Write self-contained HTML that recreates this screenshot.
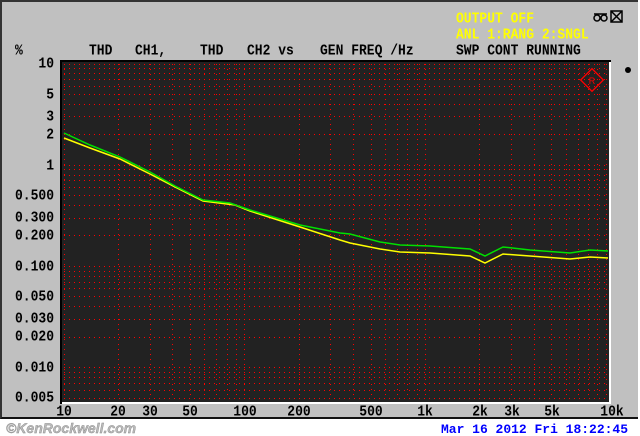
<!DOCTYPE html>
<html><head><meta charset="utf-8"><style>
html,body{margin:0;padding:0;width:640px;height:436px;overflow:hidden;background:#fff}
#panel{position:absolute;left:0;top:0;width:638px;height:419px;background:#c0c0c0;border-top:2px solid #333;border-left:2px solid #333;border-bottom:2px solid #111;box-sizing:border-box}
.t{position:absolute;font-family:"Liberation Mono",monospace;font-weight:bold;font-size:13px;line-height:13px;color:#000;white-space:pre;transform:scaleY(1.15);transform-origin:0 50%}
.y{color:#ffff00}
.r{text-align:right;width:50px}
.c{text-align:center;width:40px}
</style></head><body>
<div id="panel"></div>
<svg style="position:absolute;left:0;top:0" width="640" height="436">
<rect x="60" y="60" width="551" height="344" fill="#000"/>
<rect x="62" y="62" width="549" height="342" fill="#fff"/>
<rect x="62" y="62" width="547" height="340" fill="#222"/>
<g stroke="#ff0000" stroke-width="1" stroke-dasharray="1 4" fill="none" shape-rendering="crispEdges">
<path d="M64.5 64V398M118.5 64V398M150.5 64V398M172.5 64V398M190.5 64V398M204.5 64V398M216.5 64V398M227.5 64V398M236.5 64V398M244.5 64V398M299.5 64V398M330.5 64V398M353.5 64V398M371.5 64V398M385.5 64V398M397.5 64V398M407.5 64V398M417.5 64V398M425.5 64V398M479.5 64V398M511.5 64V398M534.5 64V398M551.5 64V398M566.5 64V398M578.5 64V398M588.5 64V398M597.5 64V398M606.5 64V398"/>
<path d="M64 64.5H607M64 68.5H607M64 73.5H607M64 79.5H607M64 86.5H607M64 94.5H607M64 104.5H607M64 116.5H607M64 134.5H607M64 165.5H607M64 169.5H607M64 175.5H607M64 180.5H607M64 187.5H607M64 195.5H607M64 205.5H607M64 218.5H607M64 235.5H607M64 266.5H607M64 271.5H607M64 276.5H607M64 282.5H607M64 288.5H607M64 296.5H607M64 306.5H607M64 319.5H607M64 337.5H607M64 367.5H607M64 372.5H607M64 377.5H607M64 383.5H607M64 390.5H607M64 398.5H607"/>
</g>
<polyline fill="none" stroke="#ffff00" stroke-width="1.5" points="64,138 90,148 120,159 150,174 175,187 203,201 235,205 250,211 300,227 340,240 350,243 380,249 400,252 430,253 470,256 485,263 503,254 530,256 570,259 590,257 608,258"/>
<polyline fill="none" stroke="#00e000" stroke-width="1.5" points="64,133 90,145 120,157 150,172 175,186 203,200 230,203 250,210 300,225 340,233 350,234 380,242 400,245 430,246 470,249 485,256 503,247 530,250 570,253 590,250 608,251"/>
<g transform="translate(592,80) rotate(45)"><rect x="-8" y="-8" width="16" height="16" fill="none" stroke="#f00" stroke-width="1.3"/></g>
<text x="592" y="84" font-family="Liberation Sans" font-size="9" fill="#f00" text-anchor="middle">R</text>
<circle cx="628" cy="70" r="3" fill="#000"/>
<g stroke="#000" stroke-width="1.5" fill="none"><circle cx="597" cy="18" r="3"/><circle cx="604" cy="18" r="3"/><path d="M594 14h13"/><rect x="611" y="11" width="11" height="11"/><path d="M611 11l11 11M622 11l-11 11"/></g>
<text x="6" y="433" font-family="Liberation Sans" font-style="italic" font-weight="bold" font-size="14" fill="#bbb" stroke="#888" stroke-width="0.4">©KenRockwell.com</text>
<text x="441" y="433" font-family="Liberation Mono" font-weight="bold" font-size="13" fill="#0000ff" textLength="187">Mar 16 2012 Fri 18:22:45</text>
</svg>
<div class="t y" style="left:456px;top:12px">OUTPUT OFF</div>
<div class="t y" style="left:456px;top:28px">ANL 1:RANG 2:SNGL</div>
<div class="t" style="left:456px;top:44px">SWP CONT RUNNING</div>
<div class="t" style="left:15px;top:44px">%</div>
<div class="t" style="left:89px;top:44px">THD</div>
<div class="t" style="left:135px;top:44px">CH1,</div>
<div class="t" style="left:200px;top:44px">THD</div>
<div class="t" style="left:247px;top:44px">CH2 vs</div>
<div class="t" style="left:320px;top:44px">GEN FREQ /Hz</div>
<div class="t r" style="left:4px;top:57px">10</div>
<div class="t r" style="left:4px;top:88px">5</div>
<div class="t r" style="left:4px;top:110px">3</div>
<div class="t r" style="left:4px;top:128px">2</div>
<div class="t r" style="left:4px;top:159px">1</div>
<div class="t r" style="left:4px;top:189px">0.500</div>
<div class="t r" style="left:4px;top:211px">0.300</div>
<div class="t r" style="left:4px;top:229px">0.200</div>
<div class="t r" style="left:4px;top:260px">0.100</div>
<div class="t r" style="left:4px;top:290px">0.050</div>
<div class="t r" style="left:4px;top:312px">0.030</div>
<div class="t r" style="left:4px;top:330px">0.020</div>
<div class="t r" style="left:4px;top:361px">0.010</div>
<div class="t r" style="left:4px;top:391px">0.005</div>
<div class="t c" style="left:44px;top:405px">10</div>
<div class="t c" style="left:98px;top:405px">20</div>
<div class="t c" style="left:130px;top:405px">30</div>
<div class="t c" style="left:170px;top:405px">50</div>
<div class="t c" style="left:225px;top:405px">100</div>
<div class="t c" style="left:279px;top:405px">200</div>
<div class="t c" style="left:351px;top:405px">500</div>
<div class="t c" style="left:405px;top:405px">1k</div>
<div class="t c" style="left:460px;top:405px">2k</div>
<div class="t c" style="left:492px;top:405px">3k</div>
<div class="t c" style="left:532px;top:405px">5k</div>
<div class="t c" style="left:592px;top:405px">10k</div>
</body></html>
